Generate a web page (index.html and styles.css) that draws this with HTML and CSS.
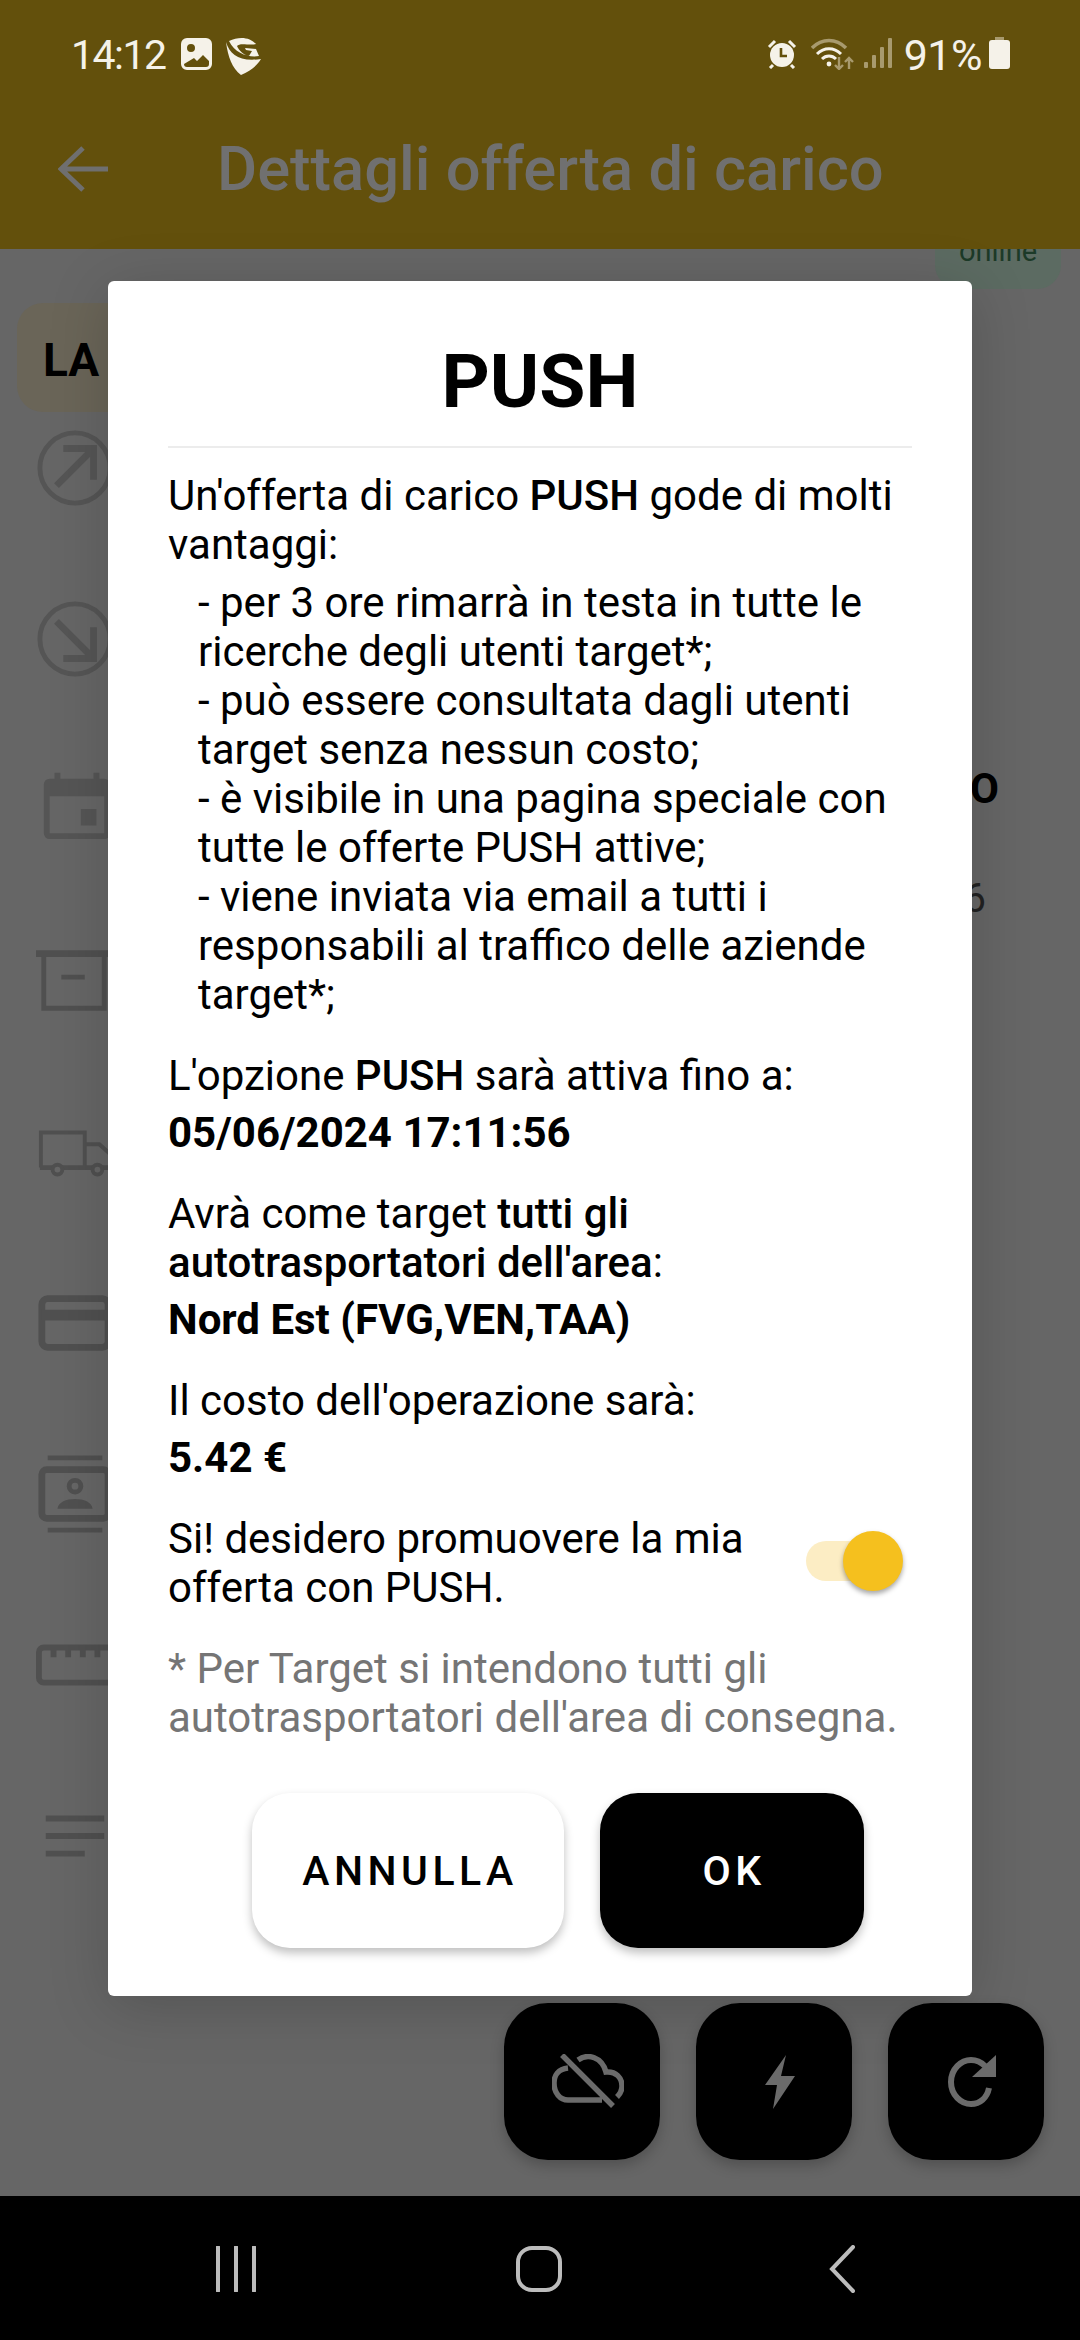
FILE: index.html
```html
<!DOCTYPE html>
<html lang="it">
<head>
<meta charset="utf-8">
<title>Dettagli offerta di carico</title>
<link rel="stylesheet" href="styles.css">
</head>
<body>
<div class="app">
  <header class="top">
    <div class="status">
      <div class="status-left">
        <span class="clock">14:12</span>
        <svg class="ic-image" viewBox="0 0 31 32"><path fill="#f5f2e9" fill-rule="evenodd" d="M6 0h19a6 6 0 0 1 6 6v20a6 6 0 0 1-6 6H6a6 6 0 0 1-6-6V6a6 6 0 0 1 6-6zM10 6a4 4 0 1 0 0 8 4 4 0 0 0 0-8zM3 26c0 2 1 3 3 3h19c2 0 3-1 3-3v-3l-6-6-6 6-3-3z"/></svg>
        <svg class="ic-logo" viewBox="0 0 36 38"><path fill="#f5f2e9" d="M0 5C4 18 14 25 35 22C31 29 24 34 15 38C6 31 2 20 0 5Z"/><path fill="#f5f2e9" d="M3 4C13-1 24 0 30 7C24 9 14 5 11 9C13 14 18 18 23 19L26 14L20 13L19 11L30 12L33 19C24 21 9 17 3 4Z"/></svg>
      </div>
      <div class="status-right">
        <svg class="ic-alarm" viewBox="0 0 30 30"><circle cx="15" cy="16" r="12" fill="#f5f2e9"/><path d="M2 8l6-6M28 8l-6-6M6 26l-3 3M24 26l3 3" stroke="#f5f2e9" stroke-width="3" fill="none"/><path d="M14 9v8h6" stroke="#63500c" stroke-width="2.6" fill="none"/></svg>
        <svg class="ic-wifi" viewBox="0 0 44 33"><path d="M1 11C11 1 25 1 35 11" stroke="#a89a6e" stroke-width="3.5" fill="none"/><path d="M6 17C13 10 23 10 30 17M11 22C15 18 21 18 25 22" stroke="#f5f2e9" stroke-width="3" fill="none"/><circle cx="18" cy="27" r="2.4" fill="#f5f2e9"/><path d="M28 20v12M24 28l4 4 4-4" stroke="#a89a6e" stroke-width="2.4" fill="none"/><path d="M38 32V21M34 25l4-4 4 4" stroke="#a89a6e" stroke-width="2.4" fill="none"/></svg>
        <svg class="ic-signal" viewBox="0 0 28 30"><g fill="#a89a6e"><rect x="0" y="24" width="4" height="6" rx="1"/><rect x="8" y="17" width="4" height="13" rx="1"/><rect x="16" y="9" width="4" height="21" rx="1"/><rect x="24" y="0" width="4" height="30" rx="1"/></g></svg>
        <span class="pct">91%</span>
        <svg class="ic-batt" viewBox="0 0 21 32"><path fill="#a89a6e" d="M6 0h9v4H6z"/><rect y="3" width="21" height="29" rx="3" fill="#f5f2e9"/></svg>
      </div>
    </div>
    <div class="toolbar">
      <svg class="ic-back" viewBox="0 0 50 46"><path d="M25 2L3 23L25 44M3 23H50" stroke="#6f6f6f" stroke-width="5" fill="none"/></svg>
      <h1 class="page-title">Dettagli offerta di carico</h1>
    </div>
  </header>

  <main class="content">
    <div class="online-chip"><span class="online-text">online</span></div>
    <div class="la-chip">LA</div>
    <div class="rows">
      <div class="row"><svg class="ic-row" viewBox="0 0 80 80"><g fill="none" stroke="#555" stroke-width="5"><circle cx="40" cy="40" r="36"/><path stroke-width="7" d="M21 58L59 20M28 20H59V52"/></g></svg></div>
      <div class="row"><svg class="ic-row" viewBox="0 0 80 80"><g fill="none" stroke="#555" stroke-width="5"><circle cx="40" cy="40" r="36"/><path stroke-width="7" d="M21 22L59 60M28 60H59V28"/></g></svg></div>
      <div class="row row-raised">
        <svg class="ic-row" viewBox="0 0 80 80"><path fill="#555" fill-rule="evenodd" d="M19 8h6v6h34V8h6v6h5a6 6 0 0 1 6 6v50a6 6 0 0 1-6 6H14a6 6 0 0 1-6-6V20a6 6 0 0 1 6-6h5zM14 32v38h56V32zM46 45h16v17H46z"/></svg>
        <div class="side">
          <span class="side-bold">O</span>
          <span class="side-num">6</span>
        </div>
      </div>
      <div class="row"><svg class="ic-row" viewBox="0 0 80 80"><g fill="none" stroke="#505050" stroke-width="5"><path d="M0 12H78"  stroke-width="7"/><path d="M8 14V68H70V14M26 36H50"/></g></svg></div>
      <div class="row"><svg class="ic-row" viewBox="0 0 80 80"><g fill="none" stroke="#505050" stroke-width="4"><path d="M5 56V20H50V56M50 32H65L76 42V56"/><path stroke-width="5" d="M4 56H76"/><circle cx="22" cy="58" r="5" fill="#666"/><circle cx="63" cy="58" r="5" fill="#666"/></g></svg></div>
      <div class="row"><svg class="ic-row" viewBox="0 0 80 80"><g fill="none" stroke="#505050" stroke-width="7"><rect x="6" y="15" width="68" height="50" rx="6"/><path stroke-width="11" d="M6 32H74"/></g></svg></div>
      <div class="row"><svg class="ic-row" viewBox="0 0 80 80"><g fill="none" stroke="#505050" stroke-width="5"><path d="M12 3H68M12 77H68"/><rect x="6" y="15" width="68" height="50" rx="5" stroke-width="7"/><circle cx="40" cy="32" r="6"/></g><path fill="#505050" d="M22 55c1-7 9-10 18-10s17 3 18 10z"/></svg></div>
      <div class="row"><svg class="ic-row" viewBox="0 0 80 80"><g fill="none" stroke="#505050" stroke-width="6"><rect x="3" y="22" width="90" height="36" rx="5"/><path d="M18 24v8M33 24v8M48 24v8M63 24v8"/></g></svg></div>
      <div class="row"><svg class="ic-row" viewBox="0 0 80 80"><path stroke="#505050" stroke-width="6" d="M10 22H70M10 40H70M10 58H50"/></svg></div>
    </div>

    <div class="fabs">
      <button class="fab" type="button"><svg class="ic-fab" viewBox="0 0 72 56"><path d="M16 14C6 15 2 22 2 29C2 39 8 46 16 46H50M26 6C36-1 50 3 54 18C64 17 70 24 70 32C70 36 68 40 65 43M10 1L61 52" fill="none" stroke="#6b6b6b" stroke-width="5.5"/></svg></button>
      <button class="fab" type="button"><svg class="ic-fab" viewBox="0 0 72 56"><path d="M42 1L37 22H51L29 55L33 31H21Z" fill="#6b6b6b"/></svg></button>
      <button class="fab" type="button"><svg class="ic-fab" viewBox="0 0 72 56"><path d="M53 34C51 44 44 50 35 50C25 50 15 41 15 28C15 15 25 6 35 6C41 6 45 8 49 12" fill="none" stroke="#6b6b6b" stroke-width="6"/><path d="M60 1V23H36Z" fill="#6b6b6b"/></svg></button>
    </div>
  </main>

  <footer class="nav">
    <svg class="ic-recents" viewBox="0 0 42 46"><path d="M3 1V45M21 1V45M39 1V45" stroke="#bcbcbc" stroke-width="4" stroke-linecap="round"/></svg>
    <svg class="ic-home" viewBox="0 0 46 46"><rect x="2" y="2" width="42" height="42" rx="14" fill="none" stroke="#bcbcbc" stroke-width="4"/></svg>
    <svg class="ic-navback" viewBox="0 0 26 48"><path d="M24 2L3 24L24 46" fill="none" stroke="#bcbcbc" stroke-width="4" stroke-linecap="round"/></svg>
  </footer>

  <section class="dialog">
    <h2 class="dialog-title">PUSH</h2>
    <div class="dialog-body">
      <p class="para">Un'offerta di carico <b>PUSH</b> gode di molti vantaggi:</p>
      <ul class="perks">
        <li>- per 3 ore rimarrà in testa in tutte le ricerche degli utenti target*;</li>
        <li>- può essere consultata dagli utenti target senza nessun costo;</li>
        <li>- è visibile in una pagina speciale con tutte le offerte PUSH attive;</li>
        <li>- viene inviata via email a tutti i responsabili al traffico delle aziende target*;</li>
      </ul>
      <p class="para block">L'opzione <b>PUSH</b> sarà attiva fino a:</p>
      <p class="para strong">05/06/2024 17:11:56</p>
      <p class="para block narrow">Avrà come target <b>tutti gli autotrasportatori dell'area</b>:</p>
      <p class="para strong">Nord Est (FVG,VEN,TAA)</p>
      <p class="para block">Il costo dell'operazione sarà:</p>
      <p class="para strong">5.42 €</p>
      <div class="confirm">
        <p class="para">Si! desidero promuovere la mia offerta con PUSH.</p>
        <span class="toggle"><span class="thumb"></span></span>
      </div>
      <p class="para note">* Per Target si intendono tutti gli autotrasportatori dell'area di consegna.</p>
    </div>
    <div class="actions">
      <button class="btn btn-light" type="button">ANNULLA</button>
      <button class="btn btn-dark" type="button">OK</button>
    </div>
  </section>
</div>
</body>
</html>
```
FILE: styles.css
```css
* { box-sizing: border-box; }
html, body { margin: 0; padding: 0; }
body { width: 1080px; height: 2340px; overflow: hidden; font-family: Roboto, "Liberation Sans", sans-serif; background: #666; }
svg { display: block; flex: none; }

.app { position: relative; width: 1080px; height: 2340px; display: flex; flex-direction: column; }

.top { height: 249px; background: #63500c; position: relative; z-index: 2; }
.status { height: 102px; padding: 37px 70px 0 71px; display: flex; justify-content: space-between; align-items: flex-start; color: #f5f2e9; }
.status-left, .status-right { display: flex; align-items: flex-start; }
.clock { font-size: 41px; line-height: 36px; letter-spacing: -1.5px; margin-right: 20px; width: 90px; }
.ic-image { width: 31px; height: 32px; margin: 1px 14px 0 0; }
.ic-logo { width: 36px; height: 38px; }
.ic-alarm { width: 30px; height: 30px; margin: 2px 14px 0 0; }
.ic-wifi { width: 44px; height: 33px; margin-right: 9px; }
.ic-signal { width: 28px; height: 30px; margin: 1px 12px 0 0; }
.pct { font-size: 43px; line-height: 36px; letter-spacing: -0.5px; margin-right: 7px; }
.ic-batt { width: 21px; height: 32px; }

.toolbar { display: flex; align-items: center; padding: 35px 0 0 58px; }
.ic-back { width: 50px; height: 46px; margin-right: 109px; }
.page-title { margin: 0; font-size: 61.5px; line-height: 64px; font-weight: 500; color: #707070; white-space: nowrap; }

.content { position: relative; flex: 1; background: #666; overflow: hidden; }
.online-chip { position: absolute; top: -40px; right: 19px; width: 126px; height: 80px; background: #5c6b62; border-radius: 24px; display: flex; justify-content: center; align-items: flex-end; padding-bottom: 20px; }
.online-text { font-size: 29px; line-height: 36px; color: #1c3a28; }
.la-chip { margin: 54px 0 0 17px; width: 200px; height: 109px; border-radius: 26px; background: #6a6558; padding: 3px 0 0 26px; font-size: 46px; line-height: 109px; font-weight: 700; color: #000; }
.rows { margin-top: -30px; }
.row { height: 171px; display: flex; align-items: center; justify-content: space-between; padding-left: 36px; position: relative; }
.row-raised .ic-row { margin-top: -12px; }
.ic-row { width: 78px; height: 78px; }
.side { align-self: flex-start; display: flex; flex-direction: column; align-items: flex-end; padding-top: 40px; }
.side-bold { font-size: 42px; line-height: 50px; font-weight: 700; color: #000; margin-right: 81px; }
.side-num { font-size: 40px; line-height: 50px; color: #222; margin: 60px 94px 0 0; }

.fabs { position: absolute; right: 36px; bottom: 36px; display: flex; gap: 36px; }
.fab { width: 156px; height: 157px; border: 0; border-radius: 44px; background: #000; box-shadow: 0 6px 14px rgba(0,0,0,.22); padding: 0 0 0 12px; display: flex; align-items: center; justify-content: center; }
.ic-fab { width: 72px; height: 56px; }

.nav { height: 144px; background: #000; display: flex; position: relative; }
.ic-recents { position: absolute; left: 215px; top: 50px; width: 42px; height: 46px; }
.ic-home { position: absolute; left: 516px; top: 50px; width: 46px; height: 46px; }
.ic-navback { position: absolute; left: 829px; top: 49px; width: 26px; height: 48px; }

.dialog { position: absolute; left: 108px; top: 281px; width: 864px; height: 1715px; background: #fff; border-radius: 6px; padding: 0 60px; box-shadow: 0 10px 60px rgba(0,0,0,.18); z-index: 3; color: #000; }
.dialog-title { margin: 0; height: 167px; border-bottom: 2px solid #ececec; padding-top: 57px; text-align: center; font-size: 75px; line-height: 86px; font-weight: 700; }
.dialog-body { padding-top: 23px; font-size: 42px; line-height: 49px; }
.para { margin: 0; }
.para b { font-weight: 500; }
.strong { font-weight: 700; font-size: 42px; }
.perks { list-style: none; margin: 9px 0 0; padding: 0 0 0 30px; }
.block { margin-top: 32px; }
.strong { margin-top: 8px; }
.narrow { max-width: 640px; }
.confirm { display: flex; align-items: center; margin-top: 32px; justify-content: space-between; }
.confirm .para { max-width: 620px; }
.toggle { position: relative; display: block; width: 87px; height: 40px; border-radius: 20px; background: #fcedc4; margin: -4px 19px 0 0; }
.thumb { position: absolute; right: -10px; top: -10px; width: 60px; height: 60px; border-radius: 50%; background: #f5c01e; box-shadow: 0 3px 5px rgba(0,0,0,.35); }
.note { margin-top: 32px; color: #757575; }
.actions { display: flex; justify-content: center; gap: 36px; margin-top: 51px; padding-left: 36px; }
.btn { height: 155px; border: 0; border-radius: 38px; padding: 0 0 0 4px; font-family: Roboto, "Liberation Sans", sans-serif; font-size: 41px; font-weight: 500; letter-spacing: 4.5px; box-shadow: 0 5px 10px rgba(0,0,0,.25); }
.btn-light { width: 312px; background: #fff; color: #000; }
.btn-dark { width: 264px; background: #000; color: #fff; }
```
